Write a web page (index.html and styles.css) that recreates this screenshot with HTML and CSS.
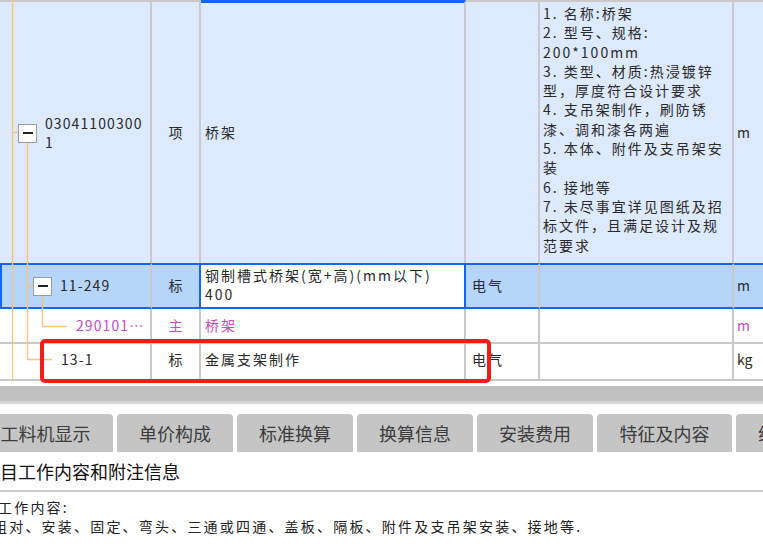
FILE: index.html
```html
<!DOCTYPE html>
<html lang="zh-CN">
<head>
    <meta charset="UTF-8" />
    <title>分部分项</title>
    <link rel="stylesheet" href="styles.css">
</head>
<body>
    <div class="grid-wrap">
        <div class="row r-item">
            <div class="cell c0"><span class="fold"></span><span class="code">03041100300<br>1</span></div>
            <div class="cell c1">项</div>
            <div class="cell c2 focus-top">桥架</div>
            <div class="cell c3"></div>
            <div class="cell c4 desc">1. 名称:桥架<br>2. 型号、规格:<br>200*100mm<br>3. 类型、材质:热浸镀锌<br>型，厚度符合设计要求<br>4. 支吊架制作，刷防锈<br>漆、调和漆各两遍<br>5. 本体、附件及支吊架安<br>装<br>6. 接地等<br>7. 未尽事宜详见图纸及招<br>标文件，且满足设计及规<br>范要求</div>
            <div class="cell c5">m</div>
        </div>
        <div class="row r-sel">
            <div class="cell c0"><span class="fold"></span><span class="code">11-249</span></div>
            <div class="cell c1">标</div>
            <div class="cell c2 editing">钢制槽式桥架(宽+高)(mm以下)<br>400</div>
            <div class="cell c3">电气</div>
            <div class="cell c4"></div>
            <div class="cell c5">m</div>
        </div>
        <div class="row r-main">
            <div class="cell c0"><span class="code">290101…</span></div>
            <div class="cell c1">主</div>
            <div class="cell c2">桥架</div>
            <div class="cell c3"></div>
            <div class="cell c4"></div>
            <div class="cell c5">m</div>
        </div>
        <div class="row r-std">
            <div class="cell c0"><span class="code">13-1</span></div>
            <div class="cell c1">标</div>
            <div class="cell c2">金属支架制作</div>
            <div class="cell c3">电气</div>
            <div class="cell c4"></div>
            <div class="cell c5">kg</div>
        </div>

        <!-- tree connectors -->
        <svg class="tree" width="152" height="381" viewBox="0 0 152 381">
            <g stroke="#f7c282" stroke-width="1.4" fill="none">
                <path d="M12.5 0V381" />
                <path d="M12.5 132.5H18" />
                <path d="M27.5 143V359.5H52" />
                <path d="M27.5 286.5H33" />
                <path d="M42.5 296V326.5H67" />
            </g>
        </svg>
        <div class="mark"></div>
    </div>

    <div class="hscroll"></div>

    <div class="tabs">
        <div class="tab wide">工料机显示</div>
        <div class="tab">单价构成</div>
        <div class="tab">标准换算</div>
        <div class="tab">换算信息</div>
        <div class="tab">安装费用</div>
        <div class="tab wide">特征及内容</div>
        <div class="tab">组价方案</div>
    </div>

    <div class="panel-title">项目工作内容和附注信息</div>
    <div class="panel-body">
        <div class="line1">工作内容:</div>
        <div class="line2">组对、安装、固定、弯头、三通或四通、盖板、隔板、附件及支吊架安装、接地等.</div>
    </div>
</body>
</html>
```

FILE: styles.css
```css
body {
    margin: 0;
    width: 763px;
    height: 550px;
    overflow: hidden;
    background: #fff;
    font-family: "Noto Sans CJK SC", sans-serif;
    color: #2a2a2a;
}
.grid-wrap {
    position: relative;
    width: 800px;
}
.row {
    display: grid;
    grid-template-columns: 152px 49px 265px 74px 194px 66px;
}
.cell {
    box-sizing: border-box;
    border-right: 2px solid #c9c9c9;
    display: flex;
    align-items: center;
    font-size: 14px;
    line-height: 19.3px;
    letter-spacing: 2px;
    white-space: nowrap;
    overflow: hidden;
}
.c1 {
    justify-content: center;
    padding-left: 2px;
}
.c2 {
    padding-left: 4px;
}
.c3 {
    padding-left: 6px;
}
.c5 {
    padding-left: 3px;
    letter-spacing: 0;
}
.code {
    letter-spacing: 1.1px;
}
.fold {
    box-sizing: border-box;
    width: 19px;
    height: 19px;
    border: 1.5px solid #9a9a9a;
    background: #fff;
    display: flex;
    align-items: center;
    justify-content: center;
    margin-right: 8px;
    flex-shrink: 0;
}
.fold::after {
    content: "";
    width: 10px;
    height: 2px;
    background: #222;
}

/* row 1: list item */
.r-item {
    height: 263px;
}
.r-item .cell {
    background: #dde9fc;
    border-top: 2px solid #c9c9c9;
}
.r-item .c0 {
    padding-left: 18px;
    padding-top: 1px;
}
.r-item .focus-top {
    border-top: 3px solid #1066f5;
}
.r-item .desc {
    align-items: flex-start;
    padding: 2px 0 0 3px;
}

/* row 2: selected */
.r-sel {
    height: 46px;
}
.r-sel .cell {
    background: #b6d5fb;
    border-top: 2px solid #1066f5;
    border-bottom: 2px solid #1066f5;
}
.r-sel .c0 {
    border-left: 2px solid #1066f5;
    padding-left: 31px;
}
.r-sel .c1 {
    border-right-color: #1066f5;
}
.r-sel .editing {
    background: #fff;
    border-right-color: #1066f5;
    align-items: flex-start;
    padding-top: 1px;
}

/* rows 3-4 */
.r-main {
    height: 35px;
}
.r-std {
    height: 37px;
}
.r-main .cell, .r-std .cell {
    border-bottom: 2px solid #c9c9c9;
}
.r-std .cell {
    padding-bottom: 3px;
}
.r-main .c0 {
    padding-left: 76px;
}
.r-std .c0 {
    padding-left: 61px;
}
.r-main .c0, .r-main .c1, .r-main .c2, .r-main .c5 {
    color: #c24ec6;
}

.tree {
    position: absolute;
    left: 0;
    top: 0;
}
.mark {
    position: absolute;
    left: 40px;
    top: 339px;
    width: 451px;
    height: 44px;
    box-sizing: border-box;
    border: 4px solid #f31c1c;
    border-radius: 5px;
}

.hscroll {
    height: 15px;
    margin-top: 5px;
    background: #c1c1c1;
    border-bottom: 3px solid #d6d6d6;
}

.tabs {
    display: flex;
    gap: 4px;
    margin-top: 10px;
    margin-left: -22px;
}
.tab {
    flex-shrink: 0;
    width: 116px;
    height: 38px;
    background: #c5c5c5;
    border-radius: 4px 4px 0 0;
    display: flex;
    align-items: center;
    justify-content: center;
    font-size: 18px;
    color: #3c3c3c;
}
.tab.wide {
    width: 135px;
}

.panel-title {
    height: 38px;
    line-height: 38px;
    font-size: 18px;
    color: #111;
    margin-left: -18px;
    border-bottom: 2px solid #cbcbcb;
    white-space: nowrap;
}
.panel-body {
    padding-top: 6px;
    font-size: 14px;
    line-height: 18.5px;
    letter-spacing: 2.2px;
    color: #222;
    white-space: nowrap;
}
.line1 {
    margin-left: -2px;
}
.line2 {
    margin-left: -7px;
}
```
